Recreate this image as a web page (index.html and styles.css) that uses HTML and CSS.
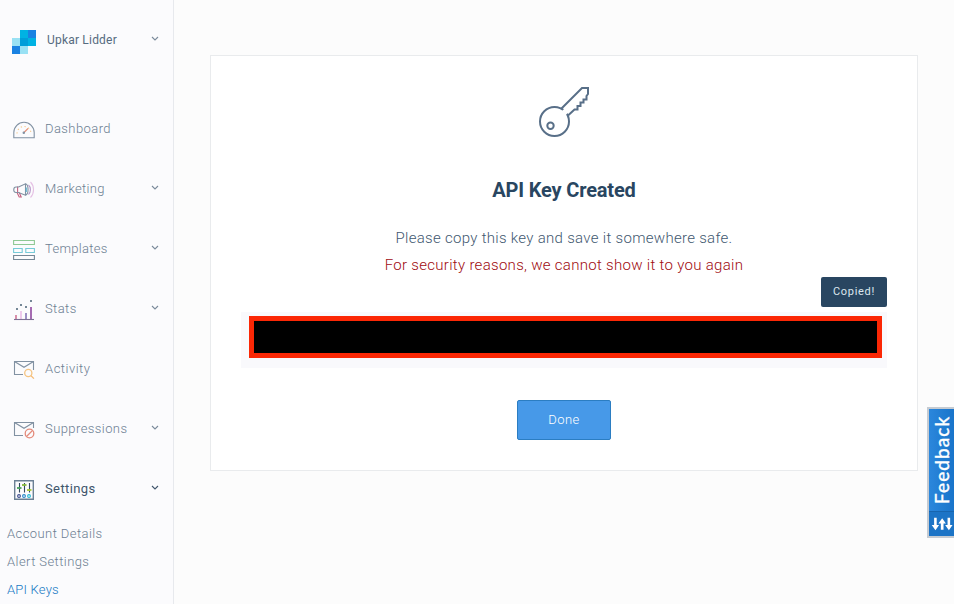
FILE: index.html
```html
<!DOCTYPE html>
<html lang="en">
<head>
<meta charset="utf-8">
<title>API Keys</title>
<link rel="stylesheet" href="styles.css">
</head>
<body>
<div class="app">
  <aside class="sidebar">
    <div class="account">
      <svg class="logo" width="24" height="24" viewBox="0 0 24 24" shape-rendering="crispEdges">
        <path fill="#00b2e3" d="M8 0h8v8H8zM16 8h8v8h-8z"/>
        <path fill="#1a82e2" d="M16 0h8v8h-8zM0 16h8v8H0z"/>
        <path fill="#009dd9" d="M8 8h8v8H8z"/>
        <path fill="#99e1f4" d="M0 8h8v8H0zM8 16h8v8H8z"/>
      </svg>
      <span class="account-name">Upkar Lidder</span>
      <svg class="chevron" width="8" height="6" viewBox="0 0 8 6"><path d="M1 1l3 3 3-3"/></svg>
    </div>
    <nav class="nav">
      <a class="item">
        <svg class="icon" width="22" height="22" viewBox="0 0 22 22"><path d="M.8 18.800V13.500a10.200 10.200 0 0 1 20.400 0v5.300z"/><path stroke="#f5c889" stroke-dasharray="1.300 2.500" d="M4 14.500a7 7 0 1 1 14 0"/><path stroke="#e48c73" d="M11 13.500l4-4"/><circle cx="10.800" cy="13.700" r=".7"/></svg>
        <span class="label dashboard">Dashboard</span>
      </a>
      <a class="item">
        <svg class="icon" width="22" height="22" viewBox="0 0 22 22"><path stroke="#c6607f" d="M4 13.500l2.200 4.500h2l-2-4.400M4.600 7.500v6"/><path d="M5.500 8H3C.2 8-.2 13.500 3 13.500h2.500l7 2.700V4.800L5.500 8M12.500 4.800c3.400 1 3.400 10.400 0 11.400"/><path stroke="#5ab8d4" d="M13.300 8.500v4.400"/><path stroke="#b596c8" d="M15.500 6c2.500 2 2.500 7.500 0 9.500"/><path stroke="#e5c0e4" d="M17.500 3c4 4 4 11.500 0 15.500"/></svg>
        <span class="label marketing">Marketing</span>
        <svg class="chevron" width="8" height="6" viewBox="0 0 8 6"><path d="M1 1l3 3 3-3"/></svg>
      </a>
      <a class="item">
        <svg class="icon" width="22" height="22" viewBox="0 0 22 22"><path stroke="#8fc995" d="M.6 1.500h20.800v4H.6z"/><path stroke="#76cad8" d="M.6 9.500h8.600v4H.6zM12.800 9.500h8.600v4h-8.600z"/><path stroke="#748796" d="M.6 16.500h20.800v4H.6z"/></svg>
        <span class="label templates">Templates</span>
        <svg class="chevron" width="8" height="6" viewBox="0 0 8 6"><path d="M1 1l3 3 3-3"/></svg>
      </a>
      <a class="item">
        <svg class="icon" width="22" height="22" viewBox="0 0 22 22"><g stroke-width="2"><path stroke="#d98faa" d="M3 16v4"/><path stroke="#edc9ec" d="M8 12v8"/><path stroke="#9c8fc5" d="M13 14v6"/><path stroke="#a56bb2" d="M18 8v12"/></g><path stroke="#7c7094" d="M1 20.500h20"/><path fill="#748796" stroke="none" d="M3 9h2v2H3zM7 5h2v2H7zM12 7h2v2h-2zM17 1h2v2h-2z"/></svg>
        <span class="label stats">Stats</span>
        <svg class="chevron" width="8" height="6" viewBox="0 0 8 6"><path d="M1 1l3 3 3-3"/></svg>
      </a>
      <a class="item">
        <svg class="icon" width="22" height="22" viewBox="0 0 22 22"><path d="M10 15.500H1.500v-13h19V11M1.500 2.500L11 8.300l9.500-5.800"/><circle stroke="#f5c482" stroke-width="1.300" cx="15.300" cy="14" r="3.600"/><path stroke="#f5b973" stroke-width="1.300" d="M17.900 16.600l3 3"/></svg>
        <span class="label activity">Activity</span>
      </a>
      <a class="item">
        <svg class="icon" width="22" height="22" viewBox="0 0 22 22"><path d="M10 16.500H1.500v-13h19V9M1.500 3.500L11 9.300l9.500-5.800"/><g stroke="#e48b7c" stroke-width="1.300"><circle cx="16.500" cy="14.500" r="4.300"/><path d="M13.500 17.500l6-6"/></g></svg>
        <span class="label suppressions">Suppressions</span>
        <svg class="chevron" width="8" height="6" viewBox="0 0 8 6"><path d="M1 1l3 3 3-3"/></svg>
      </a>
      <a class="item active">
        <svg class="icon" width="22" height="22" viewBox="0 0 22 22"><path stroke="#6b8095" stroke-width="1.400" d="M1.700 1.700h18.600v18.600H1.700z"/><path stroke="#32495e" d="M6.500 4v9.500M11.500 4v9.500M16.500 4v9.500"/><g stroke-width="1.800"><path stroke="#48a45c" d="M4 9h4.500"/><path stroke="#86b93b" d="M9 6h4.500"/><path stroke="#a8c735" d="M14 11h4.500"/></g><circle stroke="#3b4b8e" cx="6" cy="17" r="1.400"/><circle stroke="#2587cb" cx="11" cy="17" r="1.400"/><circle stroke="#22b9d3" cx="16" cy="17" r="1.400"/></svg>
        <span class="label settings">Settings</span>
        <svg class="chevron" width="8" height="6" viewBox="0 0 8 6"><path d="M1 1l3 3 3-3"/></svg>
      </a>
    </nav>
    <div class="subnav">
      <a class="sub details">Account Details</a>
      <a class="sub alert">Alert Settings</a>
      <a class="sub current">API Keys</a>
    </div>
  </aside>
  <main class="main">
    <section class="card">
      <svg class="key" width="54" height="54" viewBox="0 0 54 54"><circle cx="17.500" cy="37.500" r="14.500"/><path class="blade" d="M24.500 24.500L45 4h6v6l-1.500 2v3.500h-3v3h-3v3.500h-3v3.500h-3L31 31.500"/><path class="gap" d="M25.800 26.300l3.700 4"/><circle cx="13.500" cy="41.700" r="3.200"/></svg>
      <h1 class="title">API Key Created</h1>
      <p class="note">Please copy this key and save it somewhere safe.</p>
      <p class="warning">For security reasons, we cannot show it to you again</p>
      <div class="key-box">
        <div class="redacted"></div>
        <span class="tooltip">Copied!</span>
      </div>
      <button class="done">Done</button>
    </section>
  </main>
  <div class="feedback">
    <span class="feedback-label">Feedback</span>
    <svg class="arrows" width="25" height="25" viewBox="0 0 25 25"><path d="M4.800 6h2.700v7.500H10L6.200 19l-3.900-5.500h2.500zM11.800 18.500V12H9.300L13.200 6.500l3.900 5.500h-2.500v6.500zM18.800 6h2.700v7.500H24L20.200 19l-3.900-5.500h2.500z"/></svg>
  </div>
</div>
</body>
</html>
```
FILE: styles.css
```css
* { box-sizing: border-box; }
body {
  margin: 0;
  overflow: hidden;
  background: #fcfcfc;
  font-family: Roboto, "Liberation Sans", sans-serif;
}
.app { display: flex; height: 604px; }
.sidebar {
  width: 174px;
  flex: none;
  background: #fbfbfd;
  border-right: 1px solid #e7e9ed;
  overflow: hidden;
}
.account {
  display: flex;
  align-items: center;
  height: 54px;
  margin-top: 15px;
  padding: 0 14px 0 12px;
}
.account-name {
  margin-left: 11px;
  padding-bottom: 4px;
  font-size: 12px;
  line-height: 16px;
  letter-spacing: 0.2px;
  color: #566b80;
  white-space: nowrap;
}
.chevron {
  margin: 0 0 2px auto;
  fill: none;
  stroke: #7b8b9b;
  stroke-width: 1.1;
}
.account .chevron { margin-bottom: 6px; }
.nav { margin-top: 30px; }
.item {
  display: flex;
  align-items: center;
  height: 60px;
  padding: 0 14px 0 13px;
  color: #6c7e92;
}
.icon {
  margin-top: 2px;
  fill: none;
  stroke: #8191a2;
  stroke-width: 1.1;
}
.label {
  margin-left: 10px;
  font-size: 13px;
  font-weight: 300;
  line-height: 20px;
  letter-spacing: 0.4px;
  white-space: nowrap;
}
.dashboard, .suppressions { letter-spacing: 0.42px; }
.marketing, .templates { letter-spacing: 0.3px; }
.activity { letter-spacing: 0.5px; }
.active { color: #40566c; }
.settings { font-weight: 400; }
.active .chevron { stroke: #40566c; }
.subnav { display: flex; flex-direction: column; padding-left: 7px; }
.sub {
  height: 28px;
  font-size: 13px;
  font-weight: 300;
  line-height: 30px;
  letter-spacing: 0.42px;
  color: #6c7e92;
}
.sub.current { color: #1579c4; letter-spacing: 0.2px; }
.main { flex: 1; padding: 55px 36px 0; }
.card {
  display: flex;
  flex-direction: column;
  align-items: center;
  height: 416px;
  padding: 28px 30px 30px;
  border: 1px solid #e9ebed;
  background: #fff;
}
.key { fill: none; stroke: #586f88; stroke-width: 2; }
.key .gap { stroke: #fff; stroke-width: 5; }
.title {
  margin: 38px 0 0;
  font-size: 20px;
  font-weight: 700;
  line-height: 28px;
  letter-spacing: -0.17px;
  color: #294661;
}
.note, .warning {
  margin: 0;
  font-size: 15px;
  font-weight: 300;
  line-height: 27px;
  letter-spacing: 0.3px;
  white-space: nowrap;
}
.note { margin-top: 21px; color: #3f5870; }
.warning { color: #a00a10; }
.key-box {
  position: relative;
  width: 646px;
  height: 56px;
  margin-top: 33px;
  padding: 4px 5px 10px 8px;
  background: #f9f9fc;
}
.redacted { height: 42px; border: 5px solid #fb2705; background: #000; }
.tooltip {
  position: absolute;
  top: -35px;
  right: 0;
  width: 66px;
  height: 30px;
  border-radius: 2px;
  background: #294661;
  color: #dce6ef;
  font-size: 11px;
  line-height: 29px;
  letter-spacing: 0.7px;
  text-align: center;
}
.done {
  width: 94px;
  height: 40px;
  margin-top: 32px;
  padding: 0;
  border: 1px solid #2b7dc2;
  border-radius: 2px;
  background: #4799e8;
  color: #fff;
  font: 300 13px/38px Roboto, "Liberation Sans", sans-serif;
  letter-spacing: 0.5px;
}
.feedback {
  position: absolute;
  top: 407px;
  right: 0;
  display: flex;
  flex-direction: column;
  width: 27px;
  height: 131px;
  border: 2px solid #c5cbd2;
  border-right: 0;
  background: linear-gradient(90deg, #2b87dc, #1974ca);
}
.feedback-label {
  height: 102px;
  color: #fff;
  font: 400 19px/26px Lato, sans-serif;
  letter-spacing: 1.1px;
  -webkit-text-stroke: 0.4px #fff;
  text-align: center;
  writing-mode: vertical-rl;
  transform: rotate(180deg);
}
.arrows { fill: #fff; background: #1c74c6; border-top: 1px solid #1765ae; }
```
